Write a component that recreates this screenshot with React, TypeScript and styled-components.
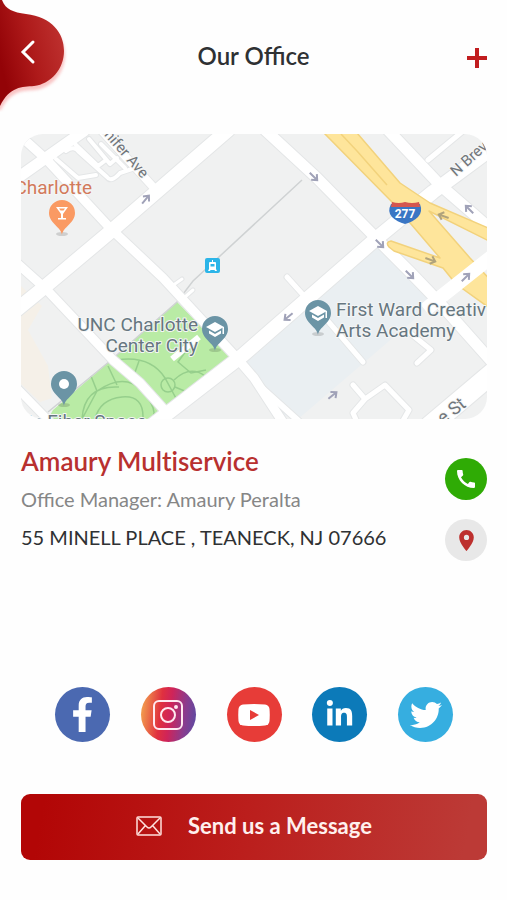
import React from "react";
import styled, { createGlobalStyle } from "styled-components";
import { MdCall, MdLocationOn } from "react-icons/md";
import { FaFacebookF, FaLinkedinIn, FaTwitter } from "react-icons/fa";

const GlobalStyle = createGlobalStyle`
  * { box-sizing: border-box; }
  body {
    margin: 0;
    background: #fefefe;
    font-family: "Lato", sans-serif;
    color: #2f3133;
  }
`;

const Page = styled.div`
  display: flex;
  flex-direction: column;
  min-height: 100vh;
`;

const Header = styled.header`
  display: grid;
  grid-template-columns: 72px 1fr 72px;
  align-items: center;
  height: 112px;
`;

const IconButton = styled.button`
  display: flex;
  padding: 0;
  border: 0;
  background: none;
  cursor: pointer;
`;

const BackButton = styled(IconButton)`
  align-self: start;
`;

const AddButton = styled(IconButton)`
  justify-self: end;
  margin: 4px 20px 0 0;
`;

const Title = styled.h1`
  margin: 0;
  font-size: 24px;
  font-weight: 600;
  line-height: 32px;
  text-align: center;
`;

const Content = styled.main`
  display: flex;
  flex-direction: column;
  padding: 22px 20px 40px 21px;
`;

const MapCard = styled.div`
  overflow: hidden;
  border-radius: 22px;
  aspect-ratio: 466 / 285;

  svg {
    display: block;
    width: 100%;
    height: 100%;
  }
`;

const Office = styled.section`
  display: flex;
  justify-content: space-between;
  padding-top: 24px;
`;

const Details = styled.div`
  display: flex;
  flex-direction: column;
`;

const OfficeName = styled.h2`
  margin: 0;
  font-size: 26px;
  font-weight: 600;
  line-height: 36px;
  font-variant-ligatures: none;
  color: #b8302f;
`;

const Manager = styled.p`
  margin: 0;
  font-size: 20px;
  line-height: 40px;
  color: #868686;
`;

const Address = styled.address`
  font-size: 20px;
  font-style: normal;
  line-height: 36px;
`;

const Actions = styled.div`
  display: flex;
  flex-direction: column;
  gap: 19px;
  padding-top: 15px;
`;

const RoundLink = styled.a<{ $size: number; $fill: string; $ink?: string }>`
  display: flex;
  align-items: center;
  justify-content: center;
  width: ${(p) => p.$size}px;
  height: ${(p) => p.$size}px;
  border-radius: 50%;
  background: ${(p) => p.$fill};
  color: ${(p) => p.$ink ?? "#fff"};
`;

const Socials = styled.nav`
  display: flex;
  justify-content: space-between;
  padding: 126px 34px 0;
`;

const SendButton = styled.button`
  display: flex;
  align-items: center;
  justify-content: center;
  gap: 26px;
  height: 66px;
  margin-top: 52px;
  padding: 0 0 2px;
  border: 0;
  border-radius: 9px;
  background: linear-gradient(100deg, #b20606 5%, #bb1e1c 48%, #bc3a36 95%);
  color: #fff0ee;
  font: 700 22px/32px "Lato", sans-serif;
  cursor: pointer;
`;

const MapText = styled.text<{ $size?: number; $color?: string }>`
  font-family: "Roboto", sans-serif;
  font-size: ${(p) => p.$size ?? 19}px;
  fill: ${(p) => p.$color ?? "#667680"};
  stroke: #f5f6f6;
  stroke-width: 2px;
  stroke-linejoin: round;
  paint-order: stroke;
`;

const ROADS: { d: string; w: number }[] = [
  { d: "M84 131L16 179", w: 11 },
  { d: "M16 132L47 160L110 228L163 278L236 357L254 378L284 424", w: 9 },
  { d: "M248 370L262 388L302 424", w: 6 },
  { d: "M102 131L155 189", w: 8 },
  { d: "M18 264L47 290L113 360L140 383L167 413", w: 9 },
  { d: "M14 385L52 424", w: 8 },
  { d: "M228 130L110 232L47 285L14 312", w: 14 },
  { d: "M150 427L243 355L377 238L433 192L495 146", w: 14 },
  { d: "M264 129L317 178L380 242L410 272L437 300L493 363", w: 11 },
  { d: "M388 130L440 185L493 231", w: 11 },
  { d: "M463 131L428 160", w: 5 },
  { d: "M430 426L495 371", w: 20 },
  { d: "M327 320L363 362", w: 5 },
  { d: "M287 277L305 297", w: 5 },
  { d: "M410 333L431 350L417 363", w: 5 },
  { d: "M353 385L365 399L385 385L409 410L401 424M365 399L353 413L357 422", w: 5 },
  { d: "M172 286L182 279M185 297L193 290", w: 3 },
  { d: "M66 151Q74 145 79 152L107 177Q111 183 120 173L132 169M75 144L98 166L106 160M89 139L110 164L117 158M101 144L125 168M56 159L78 178L96 175", w: 4 },
];

const ARROWS: [number, number, number][] = [
  [146, 199, -50],
  [314, 177, 45],
  [380, 244, 45],
  [410, 275, 45],
  [469, 209, -135],
  [466, 277, -45],
  [288, 317, 140],
  [333, 395, -40],
];

const RAMP_ARROWS: [number, number, number][] = [
  [443, 216, -160],
  [431, 260, 20],
];

const Arrow = ({ x, y, turn, color }: { x: number; y: number; turn: number; color: string }) => (
  <path
    d="M-6 0H4M0 -4L4.5 0L0 4"
    fill="none"
    stroke={color}
    strokeWidth="2"
    transform={`translate(${x} ${y}) rotate(${turn})`}
  />
);

const Pin = ({ x, y, color, children }: { x: number; y: number; color: string; children: React.ReactNode }) => (
  <g transform={`translate(${x} ${y})`}>
    <ellipse cx="0" cy="21" rx="6" ry="2" fill="#000" opacity=".14" />
    <path d="M0 22C-1 14 -13 10 -13 0A13 13 0 0 1 13 0C13 10 1 14 0 22Z" fill={color} />
    {children}
  </g>
);

const Cap = () => (
  <g fill="#fff">
    <path d="M-9 -2L0 -7L9 -2L0 3Z" />
    <path d="M-6 1.500L0 5L6 1.500V4.500L0 8L-6 4.500Z" />
    <path d="M7.500 -2H9V5H7.500Z" />
  </g>
);

const OfficeMap = () => (
  <svg viewBox="21 134 466 285" preserveAspectRatio="xMidYMid slice" role="img" aria-label="Map of the office area">
    <rect x="21" y="134" width="466" height="285" fill="#f0f1f1" />
    <path d="M21 286L42 306L28 330L48 366L52 398L40 402L21 384Z" fill="#f5f0e8" />
    <path d="M243 365L377 245L437 300L297 420L276 412Z" fill="#eaeff2" />
    <path d="M177 302L231 356L160 419H48L53 410L110 361Z" fill="#b9eba5" />
    <g fill="none" stroke="#96cf8c" strokeWidth="1.500">
      <path d="M117 360Q150 355 165 378L178 402M139 361L134 375M186 351L178 362L191 373L206 370" />
      <circle cx="168" cy="385" r="7" />
      <path d="M174 380Q190 365 205 376M175 387L187 392M91 376L97 391Q125 372 142 391T152 419M82 419Q84 385 119 387M95 419Q100 399 122 397T143 419M108 366L117 385M97 391L82 419" />
    </g>
    <path d="M302 180L193 281L177 302L110 361L48 412" fill="none" stroke="#cfd2d3" strokeWidth="1.500" />
    <g fill="none" strokeLinejoin="round" strokeLinecap="round">
      {ROADS.map((r) => (
        <path key={r.d} d={r.d} stroke="#e4e6e7" strokeWidth={r.w + 2} />
      ))}
      {ROADS.map((r) => (
        <path key={r.d} d={r.d} stroke="#fff" strokeWidth={r.w} />
      ))}
      <path d="M172 359L199 337" stroke="#fff" strokeWidth="6" strokeLinecap="butt" />
    </g>
    <g fill="#fee59b" stroke="#f2d27c" strokeWidth="1.500" strokeLinejoin="round">
      <path d="M324 133L393 203L440 258L391 241Q385 242 389 247L394 251L443 268L456 284L495 312V285L470 258L429 211L495 244V231L430 203L400 183L357 133Z" />
      <path d="M341 134L357 151L387 185" fill="none" />
    </g>
    <path d="M425 310L437 300L495 254" fill="none" stroke="#fff" strokeWidth="14" />
    {ARROWS.map(([x, y, turn]) => (
      <Arrow key={`${x}-${y}`} x={x} y={y} turn={turn} color="#a0a2b8" />
    ))}
    {RAMP_ARROWS.map(([x, y, turn]) => (
      <Arrow key={`${x}-${y}`} x={x} y={y} turn={turn} color="#b0a37c" />
    ))}

    <g>
      <path d="M391 204H420Q423 212 418 217Q413 222 405 224Q397 222 392 217Q387 212 391 204Z" fill="#3a76c4" />
      <path d="M391 207L392 202Q399 204 405 202Q412 204 419 202L420 207Z" fill="#d5564f" />
      <text x="405" y="218" textAnchor="middle" fontFamily="Roboto, sans-serif" fontSize="12" fontWeight="700" fill="#fff">277</text>
    </g>

    <g transform="translate(205 258)">
      <rect width="15" height="15" rx="2" fill="#2cb5e8" />
      <path d="M7 2H8V4H10Q11 4 11 5V11L12 13H10L9.500 12H5.500L5 13H3L4 11V5Q4 4 5 4H7Z" fill="#fff" />
      <path d="M5.500 6H9.500V8.500H5.500Z" fill="#2cb5e8" />
    </g>

    <MapText x="92" y="194" textAnchor="end" $color="#d27a5b">Charlotte</MapText>
    <MapText x="198" y="331" textAnchor="end">UNC Charlotte</MapText>
    <MapText x="198" y="352" textAnchor="end">Center City</MapText>
    <MapText x="336" y="316">First Ward Creativ</MapText>
    <MapText x="336" y="337">Arts Academy</MapText>
    <MapText x="28" y="428">ic Fiber Space</MapText>
    <MapText $size={15} $color="#70757a" textAnchor="end" transform="translate(142 179) rotate(49)">Jennifer Ave</MapText>
    <MapText $size={15} $color="#70757a" transform="translate(456 177) rotate(-42)">N Brev</MapText>
    <MapText $size={18} $color="#70757a" textAnchor="end" transform="translate(467 406) rotate(-38)">e St</MapText>

    <Pin x={62} y={213} color="#fa9a63">
      <path d="M-6 -6H6L1 1V5H4V6.500H-4V5H-1V1Z" fill="#fff" />
      <path d="M-3 -4.500H3L1.500 -2.500H-1.500Z" fill="#fa9a63" />
    </Pin>
    <Pin x={215} y={329} color="#6b94a5"><Cap /></Pin>
    <Pin x={318} y={313} color="#6b94a5"><Cap /></Pin>
    <Pin x={64} y={384} color="#6b94a5"><circle r="5" fill="#fff" /></Pin>
  </svg>
);

const BackShape = () => (
  <svg width="72" height="112" viewBox="0 0 72 112" aria-hidden="true">
    <defs>
      <linearGradient id="backFill" gradientUnits="userSpaceOnUse" x1="0" y1="60" x2="64" y2="44">
        <stop offset="0" stopColor="#930307" />
        <stop offset=".5" stopColor="#ae1a1a" />
        <stop offset="1" stopColor="#bd302e" />
      </linearGradient>
      <filter id="backShadow" x="-20%" y="-20%" width="150%" height="150%" colorInterpolationFilters="sRGB">
        <feDropShadow dx="1" dy="4" stdDeviation="1.500" floodColor="#ef4040" floodOpacity=".3" />
      </filter>
    </defs>
    <path
      d="M-8 0H2C6 10 13 12 26 14C52 17 64 33 64 51C64 69 51 84 34 86C22 87 10 86 0 106H-8Z"
      fill="url(#backFill)"
      filter="url(#backShadow)"
    />
    <path d="M33 42L23 52L33 62" fill="none" stroke="#fff" strokeWidth="3" strokeLinecap="round" />
  </svg>
);

const Instagram = () => (
  <svg width="30" height="30" viewBox="0 0 30 30" fill="none" stroke="#ffe9f0" strokeWidth="2" aria-hidden="true">
    <rect x="1" y="1" width="28" height="28" rx="5" />
    <circle cx="15" cy="15" r="7" />
    <circle cx="23" cy="7" r="1" fill="#ffe9f0" />
  </svg>
);

const YouTube = () => (
  <svg width="32" height="22" viewBox="0 0 32 22" aria-hidden="true">
    <path d="M5 .5Q16 -.5 27 .5Q31 1 31.500 5Q32 11 31.500 17Q31 21 27 21.500Q16 22.500 5 21.500Q1 21 .5 17Q0 11 .5 5Q1 1 5 .5Z" fill="#fff" />
    <path d="M12 6L21 11L12 16Z" fill="#e73c38" />
  </svg>
);

const SOCIALS = [
  { name: "Facebook", fill: "#4b69b1", icon: <FaFacebookF size={35} /> },
  { name: "Instagram", fill: "linear-gradient(97deg, #f3a04e 4%, #e0303f 36%, #cf2459 52%, #8a3c8e 77%, #5a4ba3 98%)", icon: <Instagram /> },
  { name: "YouTube", fill: "#e73c38", icon: <YouTube /> },
  { name: "LinkedIn", fill: "#0c7ab9", icon: <FaLinkedinIn size={29} /> },
  { name: "Twitter", fill: "#36aee0", icon: <FaTwitter size={32} /> },
];

export default function App() {
  return (
    <Page>
      <GlobalStyle />
      <Header>
        <BackButton type="button" aria-label="Back">
          <BackShape />
        </BackButton>
        <Title>Our Office</Title>
        <AddButton type="button" aria-label="Add">
          <svg width="20" height="20" viewBox="0 0 20 20" aria-hidden="true">
            <path d="M10 0V20M0 10H20" stroke="#c11d1f" strokeWidth="4" />
          </svg>
        </AddButton>
      </Header>
      <Content>
        <MapCard>
          <OfficeMap />
        </MapCard>
        <Office>
          <Details>
            <OfficeName>Amaury Multiservice</OfficeName>
            <Manager>Office Manager: Amaury Peralta</Manager>
            <Address>55 MINELL PLACE , TEANECK, NJ 07666</Address>
          </Details>
          <Actions>
            <RoundLink href="#call" aria-label="Call the office" $size={42} $fill="#2fab05">
              <MdCall size={24} />
            </RoundLink>
            <RoundLink href="#directions" aria-label="Directions" $size={42} $fill="#e8e8e8" $ink="#bd302e">
              <MdLocationOn size={25} />
            </RoundLink>
          </Actions>
        </Office>
        <Socials aria-label="Social media">
          {SOCIALS.map((s) => (
            <RoundLink key={s.name} href={`#${s.name.toLowerCase()}`} aria-label={s.name} $size={55} $fill={s.fill}>
              {s.icon}
            </RoundLink>
          ))}
        </Socials>
        <SendButton type="button">
          <svg width="26" height="20" viewBox="0 0 26 20" fill="none" stroke="#ffe1dd" strokeWidth="1.500" aria-hidden="true">
            <rect x="1" y="1" width="24" height="18" rx="1" />
            <path d="M2 2L11 11Q13 13 15 11L24 2M2 18L9 10M24 18L17 10" />
          </svg>
          Send us a Message
        </SendButton>
      </Content>
    </Page>
  );
}
